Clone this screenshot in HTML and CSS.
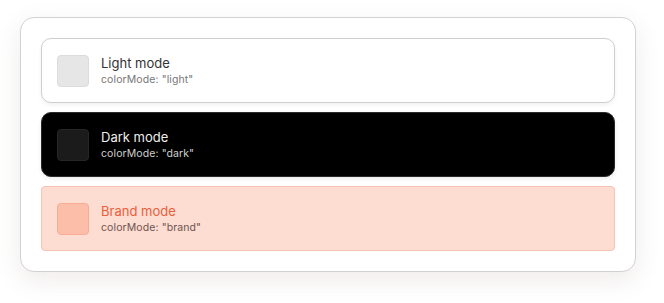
FILE: index.html
```html
<!DOCTYPE html>
<html>
<head>
<meta charset="utf-8">
<link rel="stylesheet" href="styles.css">
</head>
<body>
<div class="panel">
  <div class="mode mode-light">
    <div class="swatch"></div>
    <div class="text">
      <div class="title">Light mode</div>
      <div class="sub">colorMode: "light"</div>
    </div>
  </div>
  <div class="mode mode-dark">
    <div class="swatch"></div>
    <div class="text">
      <div class="title">Dark mode</div>
      <div class="sub">colorMode: "dark"</div>
    </div>
  </div>
  <div class="mode mode-brand">
    <div class="swatch"></div>
    <div class="text">
      <div class="title">Brand mode</div>
      <div class="sub">colorMode: "brand"</div>
    </div>
  </div>
</div>
</body>
</html>
```

FILE: styles.css
```css
html, body {
  margin: 0;
  padding: 0;
  background: #ffffff;
}
body {
  padding: 17px 28px 32px 20px;
  min-height: 254px;
  font-family: Inter, "Liberation Sans", sans-serif;
}
.panel {
  width: 574px;
  padding: 20px;
  border: 1px solid #d2d2d2;
  border-radius: 14px;
  background: #fff;
  box-shadow: 0 8px 24px rgba(120, 90, 80, 0.12);
  display: flex;
  flex-direction: column;
  gap: 9px;
}
.mode {
  display: flex;
  align-items: center;
  gap: 12px;
  padding: 15px;
  height: 33px;
  border: 1px solid transparent;
  border-radius: 10px;
}
.swatch {
  width: 30px;
  height: 30px;
  border-radius: 4px;
  border: 1px solid transparent;
  flex: none;
}
.text {
  display: flex;
  flex-direction: column;
  gap: 2px;
}
.title {
  font-size: 13px;
  line-height: 16px;
}
.sub {
  font-size: 10.5px;
  line-height: 14px;
  letter-spacing: 0.1px;
}
.mode-light {
  background: #fff;
  border-color: #cfcfcf;
  box-shadow: 0 2px 4px rgba(0, 0, 0, 0.06);
}
.mode-light .swatch {
  background: #e6e6e6;
  border-color: #dcdcdc;
}
.mode-light .title { color: #333; }
.mode-light .sub { color: #777; }
.mode-dark {
  background: #000;
  border-color: #2a2a2a;
  box-shadow: 0 2px 4px rgba(0, 0, 0, 0.08);
}
.mode-dark .swatch {
  background: #1b1b1b;
  border-color: #262626;
}
.mode-dark .title { color: #eeeeee; }
.mode-dark .sub { color: #cfcfcf; }
.mode-brand {
  background: #fddcd2;
  border-color: #f7c3b3;
  border-radius: 4px;
}
.mode-brand .swatch {
  background: #fdbea9;
  border-color: #f7ad95;
}
.mode-brand .title { color: #e8603a; }
.mode-brand .sub { color: #6e5550; }
```
